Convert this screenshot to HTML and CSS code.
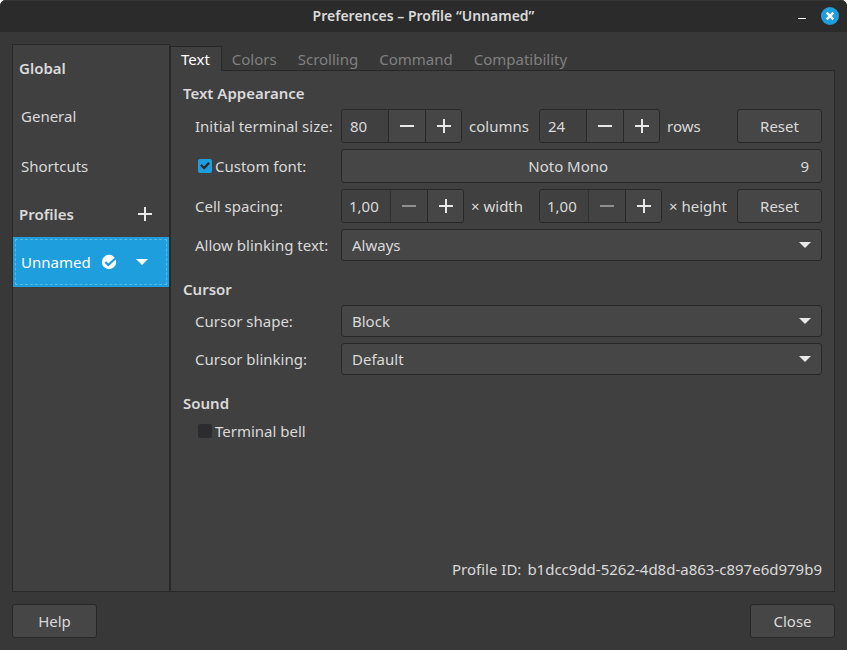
FILE: index.html
```html
<!DOCTYPE html>
<html lang="en">
<head>
<meta charset="utf-8">
<title>Preferences – Profile “Unnamed”</title>
<link rel="stylesheet" href="styles.css">
</head>
<body>
<div class="window">
  <header class="titlebar">
    <h1 class="title">Preferences – Profile “Unnamed”</h1>
    <div class="window-controls">
      <button class="minimize" type="button" aria-label="Minimize"><svg width="8" height="8" viewBox="0 0 8 8"><path d="M0 6.5h8" stroke="#fff"/></svg></button>
      <button class="close" type="button" aria-label="Close window"><svg width="18" height="18" viewBox="0 0 18 18"><path d="M5.7 5.7l6.6 6.6M12.3 5.7l-6.6 6.6" stroke="#fff" stroke-width="2.4" fill="none"/></svg></button>
    </div>
  </header>

  <div class="content">
    <nav class="sidebar">
      <h2 class="side-heading side-heading-first">Global</h2>
      <a class="side-item" href="#general">General</a>
      <a class="side-item" href="#shortcuts">Shortcuts</a>
      <div class="side-heading">
        <h2>Profiles</h2>
        <button class="icon-button add" type="button" aria-label="Add profile"><svg width="14" height="14" viewBox="0 0 14 14"><path d="M0 7h14M7 0v14" stroke="#e8e8e8" stroke-width="2"/></svg></button>
      </div>
      <div class="side-item selected">
        <a href="#unnamed">Unnamed</a>
        <svg class="default-mark" width="16" height="16" viewBox="0 0 16 16"><circle cx="8" cy="8" r="7.2" fill="#fff"/><path d="M4.3 8l3 3L14.5 4.2" stroke="#1f9ede" stroke-width="2.2" fill="none"/></svg>
        <button class="icon-button" type="button" aria-label="Profile menu"><svg width="12" height="6" viewBox="0 0 12 6"><path d="M0 0h12L6 6z" fill="#fff"/></svg></button>
      </div>
    </nav>

    <main class="notebook">
      <div class="tabs" role="tablist">
        <button class="tab active" type="button" role="tab" aria-selected="true">Text</button>
        <button class="tab" type="button" role="tab">Colors</button>
        <button class="tab" type="button" role="tab">Scrolling</button>
        <button class="tab" type="button" role="tab">Command</button>
        <button class="tab" type="button" role="tab">Compatibility</button>
        <div class="tab-fill"></div>
      </div>

      <div class="panel">
        <section class="group">
          <h2>Text Appearance</h2>
          <div class="row">
            <label for="columns">Initial terminal size:</label>
            <div class="sizes">
              <div class="measure">
                <div class="spin">
                  <input id="columns" type="text" value="80">
                  <button type="button" aria-label="Fewer columns"><svg width="14" height="14" viewBox="0 0 14 14"><path d="M0 7h14"/></svg></button>
                  <button type="button" aria-label="More columns"><svg width="14" height="14" viewBox="0 0 14 14"><path d="M0 7h14M7 0v14"/></svg></button>
                </div>
                <label for="columns">columns</label>
              </div>
              <div class="measure">
                <div class="spin">
                  <input id="rows" type="text" value="24">
                  <button type="button" aria-label="Fewer rows"><svg width="14" height="14" viewBox="0 0 14 14"><path d="M0 7h14"/></svg></button>
                  <button type="button" aria-label="More rows"><svg width="14" height="14" viewBox="0 0 14 14"><path d="M0 7h14M7 0v14"/></svg></button>
                </div>
                <label for="rows">rows</label>
              </div>
              <button class="button" type="button">Reset</button>
            </div>
          </div>
          <div class="row">
            <label class="check"><input type="checkbox" checked>Custom font:</label>
            <button class="button font-button" type="button"><span class="font-name">Noto Mono</span><span>9</span></button>
          </div>
          <div class="row">
            <label for="cell-width">Cell spacing:</label>
            <div class="sizes">
              <div class="measure">
                <div class="spin wide">
                  <input id="cell-width" type="text" value="1,00">
                  <button type="button" aria-label="Narrower" disabled><svg width="14" height="14" viewBox="0 0 14 14"><path d="M0 7h14"/></svg></button>
                  <button type="button" aria-label="Wider"><svg width="14" height="14" viewBox="0 0 14 14"><path d="M0 7h14M7 0v14"/></svg></button>
                </div>
                <label for="cell-width">× width</label>
              </div>
              <div class="measure">
                <div class="spin wide">
                  <input id="cell-height" type="text" value="1,00">
                  <button type="button" aria-label="Shorter" disabled><svg width="14" height="14" viewBox="0 0 14 14"><path d="M0 7h14"/></svg></button>
                  <button type="button" aria-label="Taller"><svg width="14" height="14" viewBox="0 0 14 14"><path d="M0 7h14M7 0v14"/></svg></button>
                </div>
                <label for="cell-height">× height</label>
              </div>
              <button class="button" type="button">Reset</button>
            </div>
          </div>
          <div class="row">
            <label for="blink-text">Allow blinking text:</label>
            <div class="combo"><select id="blink-text"><option>Always</option></select><svg width="12" height="6" viewBox="0 0 12 6"><path d="M0 0h12L6 6z"/></svg></div>
          </div>
        </section>

        <section class="group">
          <h2>Cursor</h2>
          <div class="row">
            <label for="cursor-shape">Cursor shape:</label>
            <div class="combo"><select id="cursor-shape"><option>Block</option></select><svg width="12" height="6" viewBox="0 0 12 6"><path d="M0 0h12L6 6z"/></svg></div>
          </div>
          <div class="row">
            <label for="cursor-blink">Cursor blinking:</label>
            <div class="combo"><select id="cursor-blink"><option>Default</option></select><svg width="12" height="6" viewBox="0 0 12 6"><path d="M0 0h12L6 6z"/></svg></div>
          </div>
        </section>

        <section class="group">
          <h2>Sound</h2>
          <div class="row">
            <label class="check"><input type="checkbox">Terminal bell</label>
          </div>
        </section>

        <p class="profile-id"><span>Profile ID:</span><span>b1dcc9dd-5262-4d8d-a863-c897e6d979b9</span></p>
      </div>
    </main>
  </div>

  <footer class="actions">
    <button class="button" type="button">Help</button>
    <button class="button" type="button">Close</button>
  </footer>
</div>
</body>
</html>
```
FILE: styles.css
```css
:root {
  --base: #404040;
  --window: #383838;
  --line: #282828;
  --button: #464646;
  --text: #dadada;
  --accent: #1f9ede;
}

* {
  box-sizing: border-box;
}

body {
  margin: 0;
  background: #fff;
  color: var(--text);
  font: 15px/20px "Noto Sans", sans-serif;
}

button,
input,
select {
  margin: 0;
  color: inherit;
  font: inherit;
}

h1,
h2,
p {
  margin: 0;
}

h2 {
  font-size: 15px;
  font-weight: 600;
  line-height: 20px;
}

svg {
  display: block;
}

.window {
  display: flex;
  flex-direction: column;
  min-height: 100vh;
  overflow: hidden;
  border-radius: 6px 6px 0 0;
  background: var(--window);
}

.titlebar {
  display: grid;
  grid-template-columns: 1fr auto 1fr;
  align-items: center;
  height: 32px;
  padding: 0 8px 1px;
  border-top: 1px solid #363636;
  background: #2b2b2b;
}

.title {
  grid-column: 2;
  font-size: 14px;
  font-weight: 600;
}

.window-controls {
  display: flex;
  align-items: center;
  justify-content: flex-end;
  gap: 15px;
}

.window-controls button,
.icon-button {
  padding: 0;
  border: 0;
  background: none;
}

.window-controls .close {
  border-radius: 50%;
  background: var(--accent);
}

.content {
  display: flex;
  flex: 1;
  padding: 12px 12px 0;
}

.sidebar {
  width: 158px;
  border: 1px solid var(--line);
  background: var(--base);
}

.side-heading {
  display: flex;
  align-items: center;
  justify-content: space-between;
  height: 45px;
  padding: 0 17px 2px 6px;
}

.side-heading-first {
  height: 47px;
}

.side-item {
  display: flex;
  align-items: center;
  height: 50px;
  padding: 0 8px 2px;
  color: inherit;
  text-decoration: none;
}

.side-item a {
  color: inherit;
  text-decoration: none;
}

.selected {
  gap: 10px;
  padding-bottom: 0;
  background: var(--accent);
  color: #fff;
  outline: 1px dashed #55b6e8;
  outline-offset: -3px;
}

.selected .icon-button {
  margin-left: 9px;
}

.notebook {
  display: flex;
  flex: 1;
  flex-direction: column;
  padding-top: 2px;
}

.tabs {
  display: flex;
}

.tab {
  height: 25px;
  padding: 0 11px 0 10px;
  border: 0;
  border-top: 1px solid transparent;
  border-bottom: 1px solid var(--line);
  background: none;
  color: #808080;
}

.tab.active {
  border: 1px solid var(--line);
  border-bottom: 0;
  background: var(--base);
  color: #fff;
}

.tab-fill {
  flex: 1;
  border-bottom: 1px solid var(--line);
}

.panel {
  display: flex;
  flex: 1;
  flex-direction: column;
  gap: 18px;
  padding: 12px;
  border: 1px solid var(--line);
  border-top: 0;
  background: var(--base);
}

.group {
  display: flex;
  flex-direction: column;
  gap: 6px;
}

.row {
  display: grid;
  grid-template-columns: 146px 1fr;
  align-items: center;
  min-height: 24px;
  padding-left: 12px;
}

.sizes {
  display: grid;
  grid-template-columns: 198px 1fr 85px;
}

.measure {
  display: flex;
  align-items: center;
  gap: 7px;
}

.spin {
  display: flex;
  height: 34px;
  border: 1px solid var(--line);
  border-radius: 3px;
  overflow: hidden;
}

.spin input {
  width: 46px;
  padding: 0 8px;
  border: 0;
  background: var(--base);
}

.wide input {
  width: 48px;
  padding: 0 7px;
}

.spin button {
  display: grid;
  place-items: center;
  width: 37px;
  padding: 0;
  border: 0;
  border-left: 1px solid var(--line);
  background: var(--button);
}

.spin button:last-child {
  width: 36px;
}

.spin button:disabled {
  border-color: #303030;
  background: #434343;
}

.spin path {
  stroke: #e8e8e8;
  stroke-width: 2;
}

.spin button:disabled path {
  stroke: #909090;
}

.button {
  min-width: 85px;
  height: 34px;
  padding: 0 12px;
  border: 1px solid var(--line);
  border-radius: 3px;
  background: var(--button);
}

.font-button {
  display: flex;
  align-items: center;
}

.font-name {
  flex: 1;
  padding-right: 18px;
}

.check {
  display: flex;
  align-items: center;
  gap: 3px;
  padding-left: 3px;
}

.check input {
  display: grid;
  place-items: center;
  flex: none;
  width: 14px;
  height: 14px;
  border-radius: 2px;
  background: #2c2c2e;
  appearance: none;
}

.check input:checked {
  background: var(--accent);
}

.check input:checked::before {
  width: 10px;
  height: 8px;
  background: #2b2b2b;
  clip-path: polygon(0 45%, 18% 28%, 40% 55%, 82% 0, 100% 18%, 42% 96%);
  content: "";
}

.combo {
  display: grid;
  align-items: center;
}

.combo select {
  grid-area: 1 / 1;
  width: 100%;
  height: 32px;
  padding: 0 10px;
  border: 1px solid var(--line);
  border-radius: 3px;
  background: var(--button);
  appearance: none;
}

.combo svg {
  grid-area: 1 / 1;
  justify-self: end;
  margin-right: 11px;
  fill: #e8e8e8;
  pointer-events: none;
}

.profile-id {
  display: flex;
  justify-content: flex-end;
  gap: 6px;
  margin-top: auto;
}

.actions {
  display: flex;
  justify-content: space-between;
  padding: 12px;
}
```
